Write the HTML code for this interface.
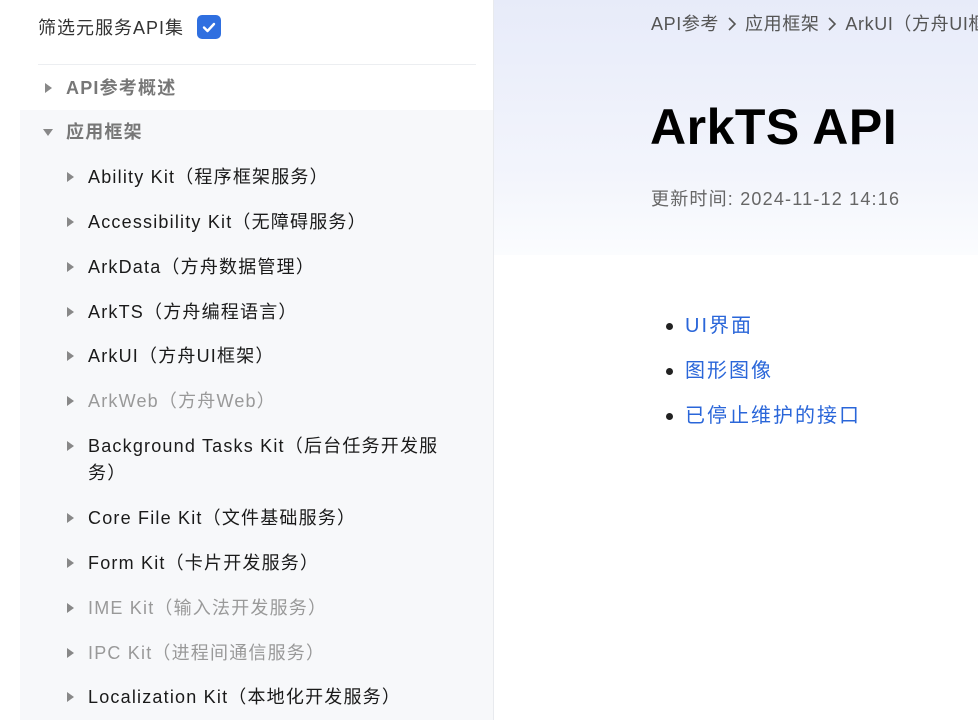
<!DOCTYPE html>
<html><head><meta charset="utf-8"><style>
*{margin:0;padding:0;box-sizing:border-box}
body{width:978px;height:720px;overflow:hidden;background:#fff;font-family:"Liberation Sans","Noto Sans CJK SC",sans-serif;position:relative}
.side{position:absolute;left:20px;top:0;width:474px;height:720px;border-right:1px solid #e8eaee;background:#fff}
.grey{position:absolute;left:0;top:110px;width:473px;height:610px;background:#f7f8fa}
.filter{position:absolute;left:18px;top:16px;font-size:18px;color:#333;line-height:24px;letter-spacing:1px}
.cb{position:absolute;left:177px;top:15px;width:24px;height:24px;border-radius:5px;background:#2f6fe0}
.hr{position:absolute;left:18px;top:64px;width:438px;height:1px;background:#eceef1}
.it{position:absolute;font-size:18px;line-height:27px;color:#1a1a1a;white-space:nowrap;letter-spacing:1.2px}
.it.top{left:46px;font-weight:bold;color:#777}
.it.ch{left:68px}
.it.dim{color:#999}
.ar{position:absolute;width:0;height:0;border-top:5px solid transparent;border-bottom:5px solid transparent;border-left:7px solid #888}
.ad{position:absolute;width:0;height:0;border-left:5px solid transparent;border-right:5px solid transparent;border-top:7px solid #888}
.main{position:absolute;left:494px;top:0;width:484px;height:255px;background:linear-gradient(#e7ebf9,#f3f5fc 70%,#fbfcfe)}
.bc{position:absolute;left:651px;top:11px;font-size:18px;color:#555;white-space:nowrap;line-height:26px;letter-spacing:0.6px}
.bc svg{vertical-align:-2px;margin:0 8px}
h1{position:absolute;left:650px;top:97px;font-size:50px;font-weight:bold;color:#000;line-height:60px;letter-spacing:0.5px}
.upd{position:absolute;left:651px;top:186px;font-size:18px;color:#666;line-height:26px;letter-spacing:1.2px}
ul{position:absolute;left:685px;top:312px;list-style:none}
li{font-size:20px;color:#2a66d9;line-height:28px;margin-bottom:17px;position:relative;letter-spacing:2px}
li:before{content:"";position:absolute;left:-19px;top:11px;width:7px;height:7px;border-radius:50%;background:#222}
</style></head><body>
<div class="side">
<div class="grey"></div>
<div class="filter">筛选元服务API集</div>
<div class="cb"><svg width="24" height="24"><path d="M7 12.5l3.5 3.5 6.5-7" stroke="#fff" stroke-width="2.4" fill="none" stroke-linecap="round" stroke-linejoin="round"/></svg></div>
<div class="hr"></div>
<div class="ar" style="left:25px;top:83px"></div><div class="it top" style="top:75px">API参考概述</div>
<div class="ad" style="left:23px;top:129px"></div><div class="it top" style="top:119px">应用框架</div>
<div class="ar" style="left:47px;top:172px"></div><div class="it ch" style="top:164px">Ability Kit（程序框架服务）</div>
<div class="ar" style="left:47px;top:217px"></div><div class="it ch" style="top:209px">Accessibility Kit（无障碍服务）</div>
<div class="ar" style="left:47px;top:262px"></div><div class="it ch" style="top:254px">ArkData（方舟数据管理）</div>
<div class="ar" style="left:47px;top:307px"></div><div class="it ch" style="top:299px">ArkTS（方舟编程语言）</div>
<div class="ar" style="left:47px;top:351px"></div><div class="it ch" style="top:343px">ArkUI（方舟UI框架）</div>
<div class="ar" style="left:47px;top:396px"></div><div class="it ch dim" style="top:388px">ArkWeb（方舟Web）</div>
<div class="ar" style="left:47px;top:441px"></div><div class="it ch" style="top:433px">Background Tasks Kit（后台任务开发服<br>务）</div>
<div class="ar" style="left:47px;top:513px"></div><div class="it ch" style="top:505px">Core File Kit（文件基础服务）</div>
<div class="ar" style="left:47px;top:558px"></div><div class="it ch" style="top:550px">Form Kit（卡片开发服务）</div>
<div class="ar" style="left:47px;top:603px"></div><div class="it ch dim" style="top:595px">IME Kit（输入法开发服务）</div>
<div class="ar" style="left:47px;top:648px"></div><div class="it ch dim" style="top:640px">IPC Kit（进程间通信服务）</div>
<div class="ar" style="left:47px;top:692px"></div><div class="it ch" style="top:684px">Localization Kit（本地化开发服务）</div>
</div>
<div class="main"></div>
<div class="bc">API参考<svg width="10" height="16"><path d="M2 2l6 6-6 6" stroke="#555" stroke-width="1.6" fill="none"/></svg>应用框架<svg width="10" height="16"><path d="M2 2l6 6-6 6" stroke="#555" stroke-width="1.6" fill="none"/></svg>ArkUI（方舟UI框架）</div>
<h1>ArkTS API</h1>
<div class="upd">更新时间: 2024-11-12 14:16</div>
<ul><li>UI界面</li><li>图形图像</li><li>已停止维护的接口</li></ul>
</body></html>
